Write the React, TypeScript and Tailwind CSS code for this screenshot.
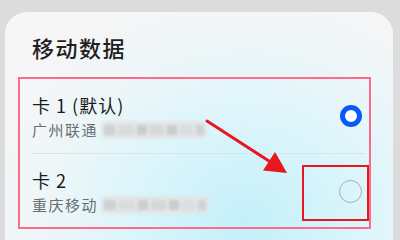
import React from 'react';

const Blurred = ({ width }: { width: number }) => (
  <div className="ml-[3px] flex h-[18px] items-center gap-[3px] overflow-hidden rounded-md bg-[#e3e6e7] px-[3px] blur-[1.6px]" style={{ width }}>
    <span className="h-[10px] w-[14px] bg-[#cdd1d2]" />
    <span className="h-[10px] w-[20px] bg-[#d8dcdd]" />
    <span className="h-[10px] w-[12px] bg-[#c9cdce]" />
    <span className="h-[10px] w-[18px] bg-[#d4d8d9]" />
    <span className="h-[10px] w-[12px] bg-[#c8cccd]" />
    <span className="h-[10px] w-[16px] bg-[#dadedf]" />
    <span className="h-[10px] w-[10px] bg-[#ced2d3]" />
  </div>
);

const SimRow = ({ name, carrier, blur, selected }: { name: string; carrier: string; blur: number; selected?: boolean }) => (
  <div className="flex h-[74px] items-center pl-3 pr-[7px]">
    <div className="flex flex-1 flex-col gap-[3px]">
      <div className="text-[18px] leading-[24px] tracking-[1px] text-[#1b1b1b]">{name}</div>
      <div className="flex items-center text-[15px] leading-[20px] tracking-[1.5px] text-[#6b6e70]">
        {carrier}
        <Blurred width={blur} />
      </div>
    </div>
    {selected ? (
      <div className="h-[22px] w-[22px] rounded-full border-[5px] border-[#0a59f7] bg-white" />
    ) : (
      <div className="h-[23px] w-[23px] rounded-full border-[1.5px] border-[#a9adae]" />
    )}
  </div>
);

export default function App() {
  return (
    <div
      className="relative h-[240px] w-[400px] overflow-hidden bg-[#dcdcdc] pl-[5px] pr-[7px] pt-[12px]"
      style={{ fontFamily: '"Noto Sans CJK SC", "Noto Sans", sans-serif' }}
    >
      <div className="h-[240px] rounded-t-[22px] bg-[radial-gradient(ellipse_at_62%_88%,#c4f0fa_0%,#dcf5fb_35%,#eef6f8_60%,#f6f6f7_80%)] pt-[20px]">
        <div className="pl-[27px] text-[22px] font-medium leading-[30px] tracking-[1.5px] text-[#1f1f1f]">移动数据</div>
        <div className="ml-[13px] mt-[15px] h-[152px] w-[353px] border-2 border-[#fc6a8c]">
          <SimRow name="卡 1 (默认)" carrier="广州联通" blur={106} selected />
          <div className="ml-3 mr-[4px] h-px bg-[#dfe3e4]" />
          <SimRow name="卡 2" carrier="重庆移动" blur={108} />
        </div>
      </div>

      <div className="absolute left-[302px] top-[165px] h-[56px] w-[67px] border-2 border-[#e8161f]" />

      <svg className="absolute left-0 top-0" width="400" height="240" viewBox="0 0 400 240">
        <line x1="207" y1="121" x2="272" y2="163" stroke="#e8161f" strokeWidth="3" strokeLinecap="round" />
        <polygon points="287,173 263,170.5 275,152" fill="#e8161f" />
      </svg>
    </div>
  );
}
